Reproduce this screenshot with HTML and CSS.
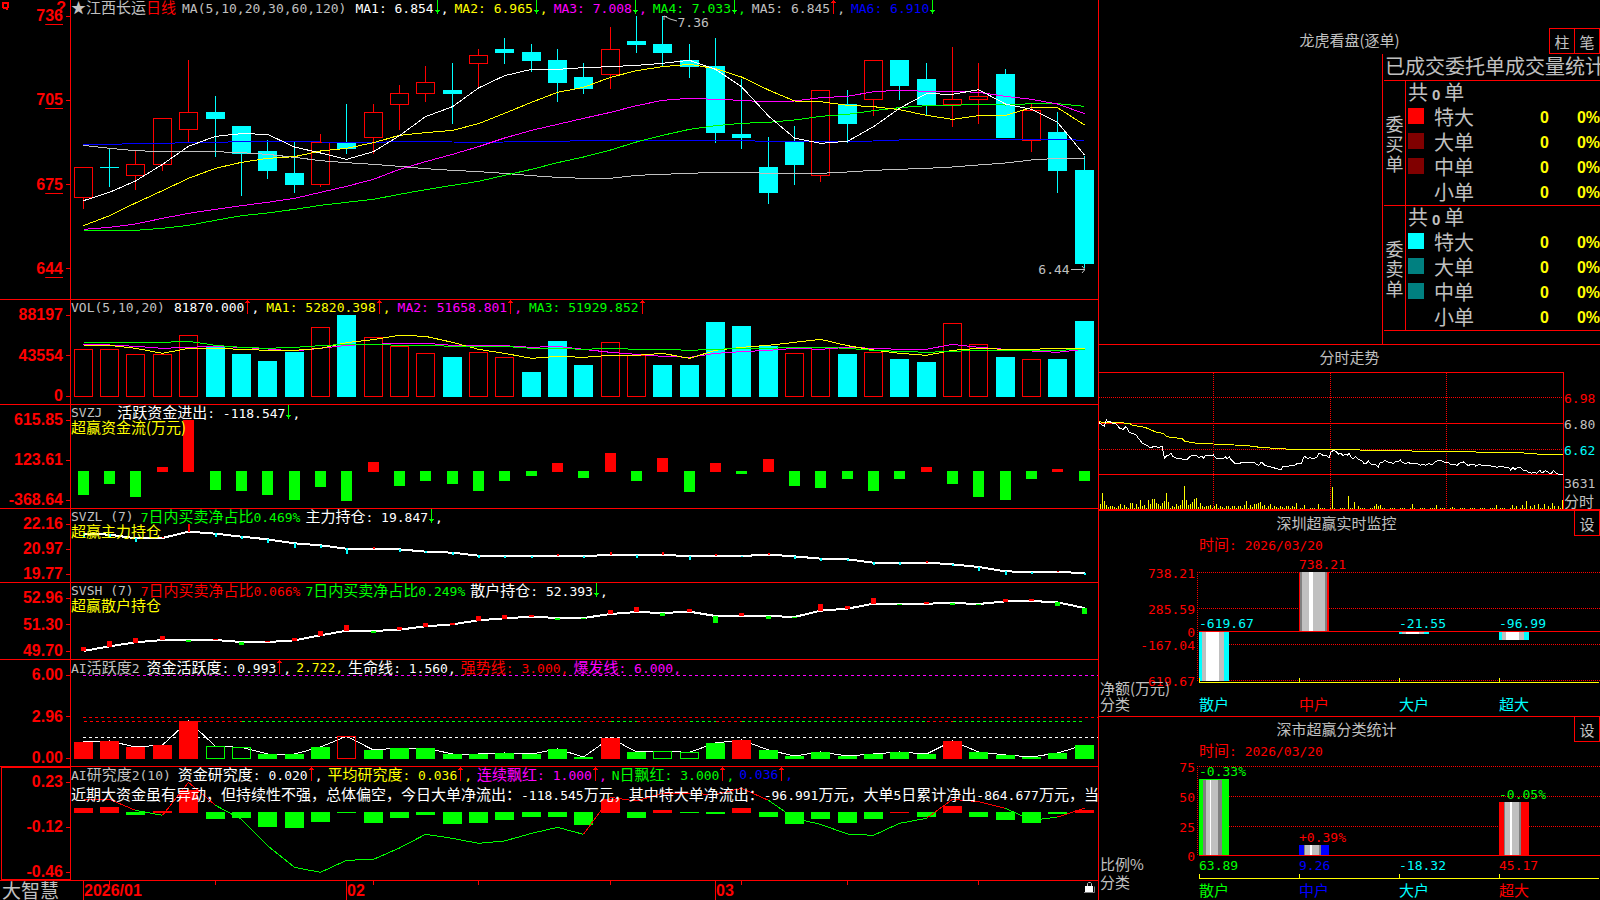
FILE: index.html
```html
<!DOCTYPE html>
<html lang="zh-CN">
<head>
<meta charset="utf-8">
<title>江西长运 日线</title>
<link rel="stylesheet" href="styles.css">
</head>
<body>
<svg class="defs" aria-hidden="true">
  <symbol id="up" viewBox="0 0 7 14"><path d="M3 0h1v14h-1zM2 1h3v1h-3zM1 2h5v1h-5z"/></symbol>
  <symbol id="down" viewBox="0 0 7 14"><path d="M3 0h1v14h-1zM2 11h3v1h-3zM1 10h5v1h-5z"/></symbol>
</svg>
<div class="screen">
  <main class="left">
    <section class="panel">
      <div class="axis axis-main">
        <svg class="corner" viewBox="0 0 8 9"><path d="M0 0h7v6h-1v2h-2v-1h-3v-1h-1zM2 2v3h3v-3z" fill-rule="evenodd"/></svg>
        <span class="help">?</span>
        <span class="lab"><span>7<u>36</u></span></span><span class="lab"><span>7<u>05</u></span></span><span class="lab"><span>6<u>75</u></span></span><span class="lab"><span>6<u>44</u></span></span>
      </div>
      <div class="plot">
        <svg class="chart" id="kline" viewBox="0 0 1027 897" preserveAspectRatio="none"></svg>
        <div class="head head-main gray"><span class="name"><b>★江西长运</b><b class="red">日线</b></span><span class="title-ma">MA(5,10,20,30,60,120)</span><span class="white">MA1: 6.854<svg class="arrow"><use href="#down"/></svg>,</span><span class="yellow">MA2: 6.965<svg class="arrow"><use href="#down"/></svg>,</span><span class="magenta">MA3: 7.008<svg class="arrow"><use href="#down"/></svg>,</span><span class="green">MA4: 7.033<svg class="arrow"><use href="#down"/></svg>,</span><span>MA5: 6.845<svg class="arrow rise"><use href="#up"/></svg>,</span><span class="blue">MA6: 6.910<svg class="arrow"><use href="#down"/></svg></span></div>
        <div class="mark mark-high"><svg viewBox="0 0 14 8"><path d="M0 1.500h4M1 1v4M1 1l6 3l7 2"/></svg>7.36</div>
        <div class="mark mark-low">6.44<svg viewBox="0 0 14 8"><path d="M0 4.500h14M11 1l3 3.500l-3 3.500"/></svg></div>
      </div>
    </section>

    <section class="panel">
      <div class="axis"><span class="lab">88197</span><span class="lab">43554</span><span class="lab">0</span></div>
      <div class="plot">
        <svg class="chart" id="volume" viewBox="0 15 1027 312" preserveAspectRatio="none"></svg>
        <div class="head head-volume"><span class="gray">VOL(5,10,20)</span><span class="white">81870.000<svg class="arrow rise"><use href="#up"/></svg>,</span><span class="yellow">MA1: 52820.398<svg class="arrow rise"><use href="#up"/></svg>,</span><span class="magenta">MA2: 51658.801<svg class="arrow rise"><use href="#up"/></svg>,</span><span class="green">MA3: 51929.852<svg class="arrow rise"><use href="#up"/></svg></span></div>
      </div>
    </section>

    <section class="panel">
      <div class="axis"><span class="lab">615.85</span><span class="lab">123.61</span><span class="lab">-368.64</span></div>
      <div class="plot">
        <svg class="chart" id="flow" viewBox="0 330 1027 309" preserveAspectRatio="none"></svg>
        <div class="head"><span class="gray">SVZJ </span><span class="white"><b>活跃资金进出</b>: -118.547<svg class="arrow"><use href="#down"/></svg>,</span></div>
        <div class="sub yellow">超赢资金流(万元)</div>
      </div>
    </section>

    <section class="panel">
      <div class="axis"><span class="lab">22.16</span><span class="lab">20.97</span><span class="lab">19.77</span></div>
      <div class="plot">
        <svg class="chart" id="major" viewBox="0 12 1027 219" preserveAspectRatio="none"></svg>
        <div class="head"><span class="gray">SVZL (7)</span><span class="green">7<b>日内买卖净占比</b>0.469%</span><span class="white"><b>主力持仓</b>: 19.847<svg class="arrow"><use href="#down"/></svg>,</span></div>
        <div class="sub yellow">超赢主力持仓</div>
      </div>
    </section>

    <section class="panel">
      <div class="axis"><span class="lab">52.96</span><span class="lab">51.30</span><span class="lab">49.70</span></div>
      <div class="plot">
        <svg class="chart" id="retail" viewBox="0 234 1027 228" preserveAspectRatio="none"></svg>
        <div class="head"><span class="gray">SVSH (7)</span><span class="red">7<b>日内买卖净占比</b>0.066%</span><span class="green">7<b>日内买卖净占比</b>0.249%</span><span class="white"><b>散户持仓</b>: 52.393<svg class="arrow"><use href="#down"/></svg>,</span></div>
        <div class="sub yellow">超赢散户持仓</div>
      </div>
    </section>

    <section class="panel">
      <div class="axis"><span class="lab">6.00</span><span class="lab">2.96</span><span class="lab">0.00</span></div>
      <div class="plot">
        <svg class="chart" id="active" viewBox="0 465 1027 318" preserveAspectRatio="none"></svg>
        <div class="head"><span class="gray">AI<b>活跃度</b>2</span><span class="white"><b>资金活跃度</b>: 0.993<svg class="arrow rise"><use href="#up"/></svg>,</span><span class="yellow">2.722,</span><span class="white"><b>生命线</b>: 1.560,</span><span class="red"><b>强势线</b>: 3.000,</span><span class="magenta"><b>爆发线</b>: 6.000,</span></div>
      </div>
    </section>

    <section class="panel">
      <div class="axis axis-selected"><span class="lab">0.23</span><span class="lab">-0.12</span><span class="lab">-0.46</span></div>
      <div class="plot">
        <svg class="chart" id="study" viewBox="0 36 1027 339" preserveAspectRatio="none"></svg>
        <div class="head"><span class="gray">AI<b>研究度</b>2(10)</span><span class="white"><b>资金研究度</b>: 0.020<svg class="arrow rise"><use href="#up"/></svg>,</span><span class="yellow"><b>平均研究度</b>: 0.036<svg class="arrow rise"><use href="#up"/></svg>,</span><span class="magenta"><b>连续飘红</b>: 1.000<svg class="arrow rise"><use href="#up"/></svg>,</span><span class="green">N<b>日飘红</b>: 3.000<svg class="arrow rise"><use href="#up"/></svg>,</span><span class="blue">0.036<svg class="arrow rise"><use href="#up"/></svg>,</span></div>
        <div class="note white"><b>近期大资金虽有异动，但持续性不强，总体偏空，今日大单净流出：</b>-118.545<b>万元，其中特大单净流出：</b>-96.991<b>万元，大单</b>5<b>日累计净出</b>-864.677<b>万元，当</b></div>
      </div>
    </section>

    <footer class="dates">
      <span class="brand">大智慧</span>
      <div class="months">
        <svg class="chart" id="weeks" viewBox="0 0 1027 19" preserveAspectRatio="none"></svg>
        <span></span><span class="month">2026/01</span><span class="month">02</span><span class="month">03</span>
      </div>
      <svg class="lock" viewBox="0 0 11 12"><path d="M3.500 4.500v-3l1-1h2l1 1v3" fill="none" stroke="#c0c0c0"/><path d="M1 4h8v6h-8z" fill="#fff"/><path d="M0 10.500h10.500v-6" fill="none" stroke="#808080"/></svg>
    </footer>
  </main>

  <aside class="right">
    <section class="orders">
      <header class="orders-head">
        <h2>龙虎看盘(逐单)</h2>
        <div class="tabs"><button type="button">柱</button><button type="button">笔</button></div>
      </header>
      <div class="orders-body">
        <div class="stats">
          <h3>已成交委托单成交量统计</h3>
          <table>
            <colgroup><col class="c-side"><col class="c-swatch"><col><col class="c-count"><col class="c-share"></colgroup>
            <tbody>
              <tr><th class="side" rowspan="5">委买单</th><td class="total" colspan="4">共<i>0</i>单</td></tr>
              <tr><td><span class="swatch s-red"></span></td><td>特大</td><td class="num">0</td><td class="num">0%</td></tr>
              <tr><td><span class="swatch s-maroon"></span></td><td>大单</td><td class="num">0</td><td class="num">0%</td></tr>
              <tr><td><span class="swatch s-maroon"></span></td><td>中单</td><td class="num">0</td><td class="num">0%</td></tr>
              <tr><td></td><td>小单</td><td class="num">0</td><td class="num">0%</td></tr>
            </tbody>
            <tbody>
              <tr><th class="side" rowspan="5">委卖单</th><td class="total" colspan="4">共<i>0</i>单</td></tr>
              <tr><td><span class="swatch s-cyan"></span></td><td>特大</td><td class="num">0</td><td class="num">0%</td></tr>
              <tr><td><span class="swatch s-teal"></span></td><td>大单</td><td class="num">0</td><td class="num">0%</td></tr>
              <tr><td><span class="swatch s-teal"></span></td><td>中单</td><td class="num">0</td><td class="num">0%</td></tr>
              <tr><td></td><td>小单</td><td class="num">0</td><td class="num">0%</td></tr>
            </tbody>
          </table>
        </div>
      </div>
    </section>

    <section class="intraday">
      <h2>分时走势</h2>
      <div class="intraday-body">
        <div class="intraday-plot"><svg class="chart" id="intraday" viewBox="12 99 1392 408" preserveAspectRatio="none"></svg></div>
        <div class="intraday-axis"><span class="red">6.98</span><span>6.80</span><span class="cyan">6.62</span><span class="vol">3631</span><b>分时</b></div>
      </div>
    </section>

    <section class="bars">
      <header class="bars-head"><h2>深圳超赢实时监控</h2><button type="button">设</button></header>
      <p class="date red"><b>时间</b>: 2026/03/20</p>
      <svg class="barchart" viewBox="1099 553 501 163" preserveAspectRatio="xMinYMin meet">
        <path class="dots" d="M1197 572.500H1600M1197 608.500H1600M1197 644.500H1600M1197 680.500H1600M1197.500 572V681"/>
        <g class="crisp" id="bars-net"></g>
        <path class="zero" d="M1199 631.500H1600"/>
        <path class="base" d="M1199 682.500H1599M1199.500 678V682M1299.500 678V682M1399.500 678V682M1499.500 678V682"/>
        <g class="f-red end"><text x="1195" y="578">738.21</text><text x="1195" y="614">285.59</text><text x="1195" y="637">0</text><text x="1195" y="650">-167.04</text><text x="1195" y="686">-619.67</text></g>
        <text class="f-red" x="1299" y="569">738.21</text>
        <g class="f-cyan"><text x="1199" y="628">-619.67</text><text x="1399" y="628">-21.55</text><text x="1499" y="628">-96.99</text></g>
        <g class="zh"><text class="f-gray" x="1100" y="694">净额(万元)</text><text class="f-gray" x="1100" y="710">分类</text><text class="f-cyan" x="1199" y="710">散户</text><text class="f-red" x="1299" y="710">中户</text><text class="f-cyan" x="1399" y="710">大户</text><text class="f-cyan" x="1499" y="710">超大</text></g>
      </svg>
    </section>

    <section class="bars">
      <header class="bars-head"><h2>深市超赢分类统计</h2><button type="button">设</button></header>
      <p class="date red"><b>时间</b>: 2026/03/20</p>
      <svg class="barchart" viewBox="1099 759 501 141" preserveAspectRatio="xMinYMin meet">
        <path class="dots" d="M1197 766.500H1600M1197 796.500H1600M1197 826.500H1600M1197.500 766V855"/>
        <g class="crisp" id="bars-share"></g>
        <path class="zero" d="M1199 855.500H1600"/>
        <path class="base" d="M1199 878.500H1599M1199.500 874V878M1299.500 874V878M1399.500 874V878M1499.500 874V878"/>
        <g class="f-red end"><text x="1195" y="772">75</text><text x="1195" y="802">50</text><text x="1195" y="832">25</text><text x="1195" y="861">0</text></g>
        <text class="f-green" x="1199" y="776">-0.33%</text><text class="f-red" x="1299" y="842">+0.39%</text><text class="f-green" x="1499" y="799">-0.05%</text>
        <text class="f-green" x="1199" y="870">63.89</text><text class="f-blue" x="1299" y="870">9.26</text><text class="f-cyan" x="1399" y="870">-18.32</text><text class="f-red" x="1499" y="870">45.17</text>
        <g class="zh"><text class="f-gray" x="1100" y="870">比例%</text><text class="f-gray" x="1100" y="888">分类</text><text class="f-green" x="1199" y="896">散户</text><text class="f-blue" x="1299" y="896">中户</text><text class="f-cyan" x="1399" y="896">大户</text><text class="f-red" x="1499" y="896">超大</text></g>
      </svg>
    </section>
  </aside>
</div>
<script src="charts.js"></script>
</body>
</html>
```

FILE: styles.css
```css
* { box-sizing: border-box; }
body {
  margin: 0;
  background: #000;
  color: #c0c0c0;
  font: 13px/15px "DejaVu Sans Mono", "Noto Sans CJK SC", monospace;
}
h2, h3, p { margin: 0; font-weight: 400; }
b { font: 15px/15px "Noto Sans CJK SC", sans-serif; }
button {
  width: 26px;
  height: 26px;
  padding: 0;
  border: 1px solid #f00;
  background: #000;
  color: #c0c0c0;
  font: 15px/15px "Noto Sans CJK SC", sans-serif;
}
.defs { position: absolute; width: 0; height: 0; }

.red { color: #f00; }
.green { color: #0f0; }
.blue { color: #00f; }
.cyan { color: #0ff; }
.yellow { color: #ff0; }
.magenta { color: #f0f; }
.white { color: #fff; }
.gray { color: #c0c0c0; }

.screen {
  display: grid;
  grid-template-columns: minmax(0, 1098fr) minmax(0, 502fr);
  height: 100vh;
  min-height: 800px;
  overflow: hidden;
}

/* left: stacked indicator panels */
.left {
  display: grid;
  grid-template-rows: 300fr 105fr 104fr 74fr 77fr 107fr 114fr 19fr;
  min-height: 0;
}
.panel {
  display: grid;
  grid-template-columns: 71px minmax(0, 1fr);
  min-height: 0;
  border-bottom: 1px solid #f00;
}
.axis {
  position: relative;
  display: flex;
  flex-direction: column;
  justify-content: space-between;
  align-items: flex-end;
  min-height: 0;
  padding-top: 7px;
  border-right: 1px solid #f00;
  color: #f00;
  font: bold 16px/16px "Liberation Sans", sans-serif;
}
.axis-main { padding-top: 8px; padding-bottom: 22px; }
.axis-selected { margin-left: 1px; outline: 1px solid #f00; outline-offset: -1px; }
.axis u { text-underline-offset: 3px; text-decoration-thickness: 1px; }
.lab { display: flex; align-items: center; gap: 3px; }
.lab::after { content: ""; width: 4px; height: 1px; background: #f00; }
.corner { position: absolute; left: 2px; top: 2px; width: 8px; height: 9px; fill: #f00; }
.help { position: absolute; right: 4px; top: 0; }

.plot { position: relative; min-width: 0; min-height: 0; overflow: hidden; }
.chart { position: absolute; inset: 0; width: 100%; height: 100%; shape-rendering: crispEdges; }
.chart * { vector-effect: non-scaling-stroke; }
.head { position: relative; display: flex; gap: 5px; height: 15px; white-space: pre; }
.head b { line-height: 14px; }
.head > .gray:first-child { margin-right: 2px; }
.head-volume { gap: 7px; }
.head-main { gap: 6px; height: 17px; line-height: 17px; }
.title-ma { margin-right: 3px; }
.arrow { width: 7px; height: 14px; vertical-align: top; fill: #0f0; }
.arrow.rise { fill: #f00; }
.sub { position: relative; font: 15px/14px "Noto Sans CJK SC", sans-serif; }
.note { position: relative; margin-top: 4px; white-space: nowrap; }
.mark { position: absolute; display: flex; align-items: center; gap: 1px; }
.mark svg { width: 14px; height: 8px; fill: none; stroke: #c0c0c0; }
.mark-high { left: 57.600%; top: 5%; }
.mark-high svg { margin-bottom: 6px; }
.mark-low { right: 1.300%; bottom: 7.500%; }

.dates { position: relative; display: grid; grid-template-columns: 71px minmax(0, 1fr); min-height: 0; }
.brand { padding-left: 2px; font: 19px/17px "Noto Sans CJK SC", sans-serif; }
.months {
  position: relative;
  display: grid;
  grid-template-columns: 12fr 263fr 369fr 383fr;
  color: #f00;
  font: bold 16px/19px "Liberation Sans", sans-serif;
}
.month { border-left: 1px solid #f00; }
.lock { position: absolute; right: 3px; top: 1px; width: 11px; height: 12px; }

/* right: order statistics and side charts */
.right {
  display: grid;
  grid-template-rows: 345fr 166fr 206fr 183fr;
  min-height: 0;
  border-left: 1px solid #f00;
}
.right h2 { font: 15px/24px "Noto Sans CJK SC", sans-serif; text-align: center; }
.right section { display: flex; flex-direction: column; min-width: 0; min-height: 0; overflow: hidden; }
.orders { border-bottom: 1px solid #f00; }
.orders-head { display: grid; grid-template-columns: 1fr auto 1fr; padding-top: 28px; }
.orders-head h2 { grid-column: 2; }
.tabs { display: flex; justify-content: flex-end; }
.tabs button + button { margin-left: -1px; }
.orders-body { display: flex; flex: 1; justify-content: flex-end; min-height: 0; }
.stats { width: 218px; padding-left: 1px; border-left: 1px solid #f00; }
.stats h3 {
  height: 27px;
  padding-left: 1px;
  overflow: hidden;
  border-bottom: 1px solid #f00;
  font: 20px/24px "Noto Sans CJK SC", sans-serif;
  white-space: nowrap;
}
.stats table {
  width: 100%;
  table-layout: fixed;
  border-collapse: separate;
  border-spacing: 0;
  font: 20px/22px "Noto Sans CJK SC", sans-serif;
}
.c-side { width: 22px; }
.c-swatch { width: 28px; }
.c-count { width: 60px; }
.c-share { width: 51px; }
.stats td { height: 25px; padding: 0; vertical-align: top; white-space: nowrap; }
.stats tr:last-child td, .stats .side { border-bottom: 1px solid #f00; }
.stats .side {
  padding: 0 1px;
  border-right: 1px solid #f00;
  font-size: 18px;
  font-weight: 400;
  line-height: 20px;
  word-break: break-all;
}
.stats .total { padding-left: 2px; }
.stats i { padding: 0 4px; font: bold 15px/20px "Liberation Sans", sans-serif; }
.stats .num { color: #ff0; font: bold 16px/23px "Liberation Sans", sans-serif; text-align: right; }
.swatch { display: block; width: 16px; height: 16px; margin: 2px 0 0 2px; }
.s-red { background: #f00; }
.s-maroon { background: #800000; }
.s-cyan { background: #0ff; }
.s-teal { background: #008080; }

.intraday { border-bottom: 2px solid #f00; }
.intraday h2 { margin-bottom: 3px; }
.intraday-body { display: flex; flex: 1; min-height: 0; }
.intraday-plot { position: relative; flex: 1; border: solid #f00; border-width: 1px 1px 0 0; }
.intraday-axis { display: flex; flex-direction: column; gap: 11px; width: 36px; padding-top: 19px; }
.intraday-axis .vol { margin-top: 7px; }
.intraday-axis b { margin-top: -9px; }

.bars:nth-last-child(2) { border-bottom: 1px solid #f00; }
.bars-head { display: flex; height: 25px; }
.bars-head h2 { flex: 1; line-height: 23px; }
.bars-head button { margin-top: -1px; flex: none; }
.date { height: 17px; padding-left: 100px; line-height: 15px; }
.barchart { flex: 1; width: 100%; min-height: 0; overflow: visible; font: 13px "DejaVu Sans Mono", monospace; }
.zh { font: 15px "Noto Sans CJK SC", sans-serif; }
.end { text-anchor: end; }
.crisp { shape-rendering: crispEdges; }
.dots { stroke: #f00; stroke-dasharray: 1 1; fill: none; shape-rendering: crispEdges; }
.zero { stroke: #f00; shape-rendering: crispEdges; }
.base { stroke: #ff0; fill: none; shape-rendering: crispEdges; }
.f-red { fill: #f00; }
.f-green { fill: #0f0; }
.f-blue { fill: #00f; }
.f-cyan { fill: #0ff; }
.f-gray { fill: #c0c0c0; }
```

FILE: charts.js
```javascript
const RED = '#f00', GREEN = '#0f0', CYAN = '#0ff', WHITE = '#fff', YELLOW = '#ff0',
      MAGENTA = '#f0f', BLUE = '#00f', SILVER = '#c0c0c0', GRAY = '#808080';
const at = i => Math.floor(12.3 + 26.34 * i) + 0.5;

function add(host, name, attrs) {
  const node = document.createElementNS('http://www.w3.org/2000/svg', name);
  for (const key in attrs) node.setAttribute(key, attrs[key]);
  host.appendChild(node);
}
const get = id => document.getElementById(id);
const solid = (host, i, w, top, bottom, fill) =>
  add(host, 'rect', { x: at(i) - w / 2, y: top, width: w, height: bottom - top, fill });
const hollow = (host, i, top, bottom, stroke) =>
  add(host, 'rect', { x: at(i) - 9, y: top, width: 18, height: bottom - top, fill: 'none', stroke });
const wick = (host, i, top, bottom, stroke) =>
  add(host, 'path', { d: `M${at(i)} ${top}V${bottom}`, stroke });
function line(host, ys, stroke, width = 1, from = 0) {
  const points = ys.map((y, k) => `${at(from + k)},${y}`).join(' ');
  add(host, 'polyline', { points, fill: 'none', stroke, 'stroke-width': width });
}

/* daily candles: kind, body top, body bottom, high, low */
const candles = [
  ['R',502,593,502,627],['C',501,504,446,560],['R',493,527,453,570],['R',355,493,355,513],['R',337,389,180,427],
  ['C',336,357,288,470],['C',378,461,378,588],['C',453,513,420,537],['C',519,555,426,579],['R',428,553,402,561],
  ['C',429,447,312,462],['R',337,412,312,462],['R',280,314,255,390],['R',247,281,198,305],['C',270,282,189,372],
  ['R',166,191,147,267],['C',147,159,114,192],['C',156,183,132,216],['C',180,249,147,306],['C',231,267,189,282],
  ['R',148,223,81,267],['C',123,135,48,159],['C',132,159,48,198],['C',180,201,132,234],['C',198,399,114,429],
  ['C',402,414,237,447],['C',501,579,411,612],['C',426,495,378,555],['R',271,526,271,546],['C',312,372,270,429],
  ['R',181,298,181,348],['C',180,258,180,300],['C',237,315,189,345],['R',298,313,141,381],['R',289,298,189,372],
  ['C',222,414,207,414],['R',331,422,311,456],['C',396,513,336,579],['C',510,792,468,805]];
const kline = get('kline');
candles.forEach(([kind, top, bottom, high, low], i) => {
  if (kind === 'C') {
    wick(kline, i, high, low, CYAN);
    solid(kline, i, 19, top, bottom, CYAN);
  } else {
    if (high < top) wick(kline, i, high, top, RED);
    if (low > bottom) wick(kline, i, bottom, low, RED);
    hollow(kline, i, top, bottom, RED);
  }
});
line(kline, [434,433,431,430,428,427,425,425,425,426,427,427,425,425,426,427,426,425,424,422,422,422,422,422,422,422,424,424,424,424,423,420,418,418,418,418,418,418,421], BLUE);
line(kline, [436,445,452,455,455,455,458,463,472,482,488,493,499,506,511,515,520,527,532,535,535,526,523,520,517,517,520,520,520,516,511,508,505,501,495,489,480,475,475], SILVER);
line(kline, [691,691,691,685,676,661,647,639,628,616,607,598,583,569,556,544,526,508,488,471,450,426,406,388,377,370,367,360,349,343,332,323,317,316,313,315,311,311,319], GREEN);
line(kline, [688,682,672,655,640,628,617,607,595,577,559,538,508,485,463,440,414,391,373,355,337,317,301,295,298,301,306,303,293,289,275,271,274,274,277,289,298,312,341], MAGENTA);
line(kline, [677,647,609,572,535,505,487,475,470,453,445,428,406,398,391,371,340,307,277,262,232,212,200,193,206,231,270,303,305,316,320,329,346,358,347,346,323,323,375], YELLOW);
line(kline, [602,577,543,493,439,409,401,403,441,459,478,455,407,350,320,264,227,208,208,203,200,196,190,181,208,260,348,414,430,424,380,325,281,283,269,312,328,367,465], WHITE);

/* volume: bar tops, rising days are hollow */
const volume = get('volume');
[163,163,178,178,121,154,177,198,171,97,60,127,154,175,186,172,187,231,138,210,142,181,210,210,81,93,153,175,157,177,172,192,201,85,148,186,193,192,78]
  .forEach((top, i) => {
    if ([0,1,2,3,4,9,11,12,13,15,16,20,21,27,28,30,33,34,36].includes(i)) hollow(volume, i, top, 304, RED);
    else solid(volume, i, 19, top, 306, CYAN);
  });
line(volume, [148,150,154,160,157,154,157,162,168,160,151,148,145,145,151,151,152,157,154,163,172,178,184,187,175,170,166,160,163,157,160,163,163,148,157,163,168,172,163], MAGENTA);
line(volume, [151,151,160,175,160,160,163,166,166,160,143,134,121,124,142,163,175,190,184,187,181,181,175,190,166,157,151,142,133,152,165,175,181,166,160,163,163,160,160], YELLOW);
line(volume, [142,142,142,142,139,151,157,160,157,152,148,148,151,151,154,154,154,160,160,163,160,163,163,166,163,160,160,157,157,160,166,169,172,169,166,166,166,166,163], GREEN);

/* bars hanging from or standing on a centre line */
function split(host, ends, mid, w) {
  ends.forEach((y, i) => y > mid + 1 ? solid(host, i, w, mid, y, GREEN) : solid(host, i, w, y, mid + 3, RED));
}
split(get('flow'), [600,567,606,516,375,585,588,600,615,576,618,501,573,558,567,588,558,543,504,549,474,558,489,591,504,537,492,573,579,552,588,552,516,567,606,615,552,522,558], 528, 11);

/* holdings: a thick line with a mark for each day's change */
function holdings(host, ys, marks, w, fall) {
  line(host, ys, WHITE, 2);
  marks.forEach((y, i) => {
    if (y > ys[i]) solid(host, i, w, ys[i] - 1, y, fall);
    else solid(host, i, w, y, ys[i] + 1, RED);
  });
}
holdings(get('major'),
  [86,89,100,99,80,86,95,103,115,121,131,131,133,140,143,152,153,153,153,153,150,150,150,153,153,153,149,154,161,163,173,173,173,178,186,199,201,201,204],
  [96,96,111,96,57,96,102,114,129,129,147,126,141,144,150,159,159,159,147,159,141,159,141,165,148,156,144,162,168,167,180,180,168,183,198,210,207,198,210], 2, CYAN);
holdings(get('retail'),
  [438,424,412,405,405,405,411,411,406,391,377,378,374,364,358,346,340,335,339,339,327,321,324,320,333,333,333,336,317,311,296,297,296,294,297,289,288,292,309],
  [426,408,399,393,411,402,420,408,399,378,360,384,366,354,354,333,330,330,345,342,315,306,333,312,354,324,342,339,297,303,279,300,291,300,300,282,282,303,327], 5, GREEN);

/* activity */
const active = get('active');
const activity = [711,708,726,720,648,724,727,747,747,726,694,735,729,729,747,747,744,747,732,756,699,741,739,742,714,705,735,753,741,753,747,741,747,708,741,750,756,744,720];
const dash = (x1, x2, y, stroke) => add(active, 'path', { d: `M${x1} ${y}H${x2}`, stroke, 'stroke-dasharray': '3 3' });
dash(12, 1027, 511, MAGENTA);
dash(12, 1027, 637, RED);
dash(12, 1027, 697, WHITE);
[[0,6,RED],[6,19,GREEN],[19,20,RED],[20,21,GREEN],[21,23,RED],[23,24,GREEN],[24,25,RED],[25,32,GREEN],[32,33,RED],[33,38,GREEN]]
  .forEach(([a, b, c]) => dash(at(a), at(b), 649, c));
line(active, activity, WHITE);
activity.forEach((top, i) => {
  if ([5,6,22,23].includes(i)) hollow(active, i, top, 760, GREEN);
  else if (i === 10) hollow(active, i, top, 760, RED);
  else solid(active, i, 19, top, 762, [0,1,2,3,4,20,25,33].includes(i) ? RED : GREEN);
});

/* research degree */
const study = get('study');
split(study, [159,156,180,168,105,192,189,216,219,201,174,204,189,180,207,204,195,186,186,210,132,189,165,174,177,159,186,207,192,204,192,170,186,153,186,195,204,177,165], 171, 19);
const degree = [133,133,166,181,82,151,193,272,337,352,316,313,279,238,250,265,258,235,217,238,127,138,115,116,118,100,136,190,208,237,241,205,190,133,140,160,196,186,160];
[[0,2,RED],[2,3,GREEN],[3,5,RED],[5,19,GREEN],[19,26,RED],[26,32,GREEN],[32,35,RED],[35,37,GREEN],[37,38,RED]]
  .forEach(([a, b, c]) => line(study, degree.slice(a, b + 1), c, 1, a));

[1,5,11,15,20,25,29,34].forEach(i => wick(get('weeks'), i, 0, 4, RED));

/* intraday */
const day = get('intraday');
[172, 328].forEach(y => add(day, 'path', { d: `M12 ${y + 1}H1404`, stroke: RED, 'stroke-dasharray': '1 1' }));
[355.500, 706.500, 1054.500].forEach(x => add(day, 'path', { d: `M${x} 99V507`, stroke: RED, 'stroke-dasharray': '1 1' }));
[250, 403].forEach(y => add(day, 'path', { d: `M12 ${y}H1404`, stroke: RED }));
const peaks = {16:492,22:459,28:483,34:495,46:498,76:492,88:495,106:489,112:489,124:492,136:480,148:495,160:480,166:492,172:477,178:477,184:489,190:492,202:489,208:483,214:459,220:486,232:498,244:492,256:495,262:480,268:438,274:480,280:495,286:492,292:486,298:477,304:474,316:489,334:498,346:495,364:492,400:498,418:498,436:497,448:495,454:483,466:495,478:492,484:492,490:489,496:486,508:495,526:492,538:497,556:498,580:498,604:489,628:495,670:492,712:441,760:468,778:486,790:498,838:498,844:492,850:498,856:495,952:492,1024:495,1072:500,1204:495,1252:495,1264:498,1282:495,1294:483,1306:498,1318:495,1330:492,1348:492,1360:498,1372:489,1378:498,1390:498,1402:480};
for (let x = 16, n = 0; x < 1404; x += 6, n++) {
  const quiet = x < 600 ? 498 + (n % 3) * 3 : (n % 5 < 3 ? 504 : 507);
  add(day, 'rect', { x: x - 1, y: peaks[x] || quiet, width: 3, height: 507 - (peaks[x] || quiet), fill: YELLOW });
}
add(day, 'polyline', { fill: 'none', stroke: YELLOW, points: '12,245 25,247 68,247 105,251 110,255 150,262 180,275 205,281 215,290 262,296 270,304 305,310 355,312 418,315 465,318 495,322 540,325 590,328 750,329 884,332 1076,335 1275,338 1340,343 1405,343' });
add(day, 'polyline', { fill: 'none', stroke: WHITE, points: '12,248 20,254 28,259 34,240 39,246 44,244 50,249 62,250 70,260 76,266 84,268 92,260 97,266 102,276 112,281 122,283 128,292 135,300 142,310 150,314 158,318 168,324 178,318 190,322 202,320 208,355 214,348 221,346 228,340 234,350 240,352 248,356 262,357 275,360 284,350 290,347 305,347 312,353 320,349 326,354 332,346 345,348 355,345 362,354 378,355 386,356 390,350 396,356 403,351 408,359 418,369 430,370 450,367 466,368 480,369 486,374 492,376 497,368 502,368 510,376 520,379 532,382 545,386 558,390 563,381 568,378 578,380 590,375 598,376 608,370 620,369 626,352 630,350 638,356 645,353 654,356 665,352 670,342 674,340 684,346 694,346 702,354 708,336 716,331 725,336 731,342 738,340 744,348 750,343 757,345 762,340 768,352 774,356 782,350 790,359 800,361 806,369 814,369 820,363 828,372 835,374 842,374 850,381 856,366 862,368 868,361 880,366 888,367 895,371 903,363 909,366 916,359 922,368 930,370 940,368 950,371 960,371 970,372 976,376 985,372 992,376 1000,371 1012,373 1022,365 1030,362 1040,362 1050,368 1058,366 1068,374 1078,373 1086,376 1096,368 1105,366 1112,371 1120,377 1128,372 1138,372 1142,378 1154,373 1160,377 1178,376 1195,379 1205,382 1218,379 1230,382 1240,382 1247,390 1254,382 1260,388 1268,383 1278,384 1284,390 1292,390 1300,396 1310,400 1318,396 1324,400 1335,391 1341,399 1352,392 1358,396 1364,400 1370,399 1376,391 1384,400 1390,402 1405,403' });

/* cylinder bars: stripes of [width, colour] from left to right */
function cylinder(host, x, top, bottom, stripes) {
  for (const [width, fill] of stripes) {
    add(host, 'rect', { x, y: top, width, height: bottom - top, fill });
    x += width;
  }
}
const fallen = [[3,CYAN],[4,SILVER],[13,WHITE],[5,SILVER],[5,CYAN]];
const net = get('bars-net');
cylinder(net, 1199, 632, 681, fallen);
cylinder(net, 1299, 572, 631, [[1,RED],[2,GRAY],[7,SILVER],[4,WHITE],[12,SILVER],[2,GRAY],[2,RED]]);
cylinder(net, 1399, 632, 634, fallen);
cylinder(net, 1499, 632, 640, fallen);
const share = get('bars-share');
cylinder(share, 1199, 779, 780, [[30,GREEN]]);
cylinder(share, 1199, 780, 855, [[4,GREEN],[3,GRAY],[4,SILVER],[1,WHITE],[7,SILVER],[4,GRAY],[7,GREEN]]);
cylinder(share, 1299, 845, 855, [[5,BLUE],[1,GRAY],[5,SILVER],[2,WHITE],[7,SILVER],[2,GRAY],[8,BLUE]]);
cylinder(share, 1499, 802, 855, [[5,RED],[1,GRAY],[5,SILVER],[2,WHITE],[7,SILVER],[2,GRAY],[8,RED]]);
```
